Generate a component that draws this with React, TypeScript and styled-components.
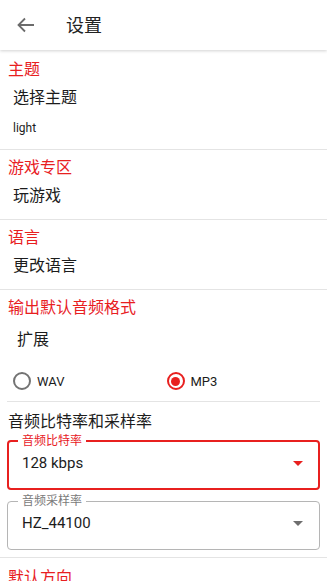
import React, { useState } from 'react';
import styled, { createGlobalStyle } from 'styled-components';

const RED = '#e8201f';

const GlobalStyle = createGlobalStyle`
  html, body {
    margin: 0;
    padding: 0;
    background: #fff;
  }
  body {
    font-family: Roboto, "Noto Sans CJK SC", sans-serif;
    color: #1c1c1c;
  }
`;

const Page = styled.div`
  width: 327px;
  height: 581px;
  overflow: hidden;
  background: #fff;
`;

const AppBar = styled.header`
  height: 50px;
  display: flex;
  align-items: center;
  padding-left: 14px;
  box-sizing: border-box;
  background: #fff;
  box-shadow: 0 1px 3px rgba(0, 0, 0, 0.18);
  position: relative;
  z-index: 1;
`;

const BackButton = styled.span`
  width: 24px;
  height: 24px;
  display: flex;
  color: #6b6b6b;
`;

const Title = styled.h1`
  margin: 2px 0 0 28px;
  font-size: 18px;
  font-weight: 400;
  line-height: 24px;
  color: #222;
`;

const Section = styled.section<{ first?: boolean; tight?: boolean }>`
  padding: ${(p) => (p.first ? '8px' : '6px')} 0 ${(p) => (p.tight ? '7px' : '11px')};
  border-bottom: 1px solid #e4e4e4;
`;

const SectionHeader = styled.div`
  padding-left: 8px;
  font-size: 16px;
  line-height: 24px;
  color: ${RED};
`;

const ItemTitle = styled.div<{ indent?: number; gap?: number }>`
  margin-top: ${(p) => p.gap ?? 4}px;
  padding-left: ${(p) => p.indent ?? 13}px;
  font-size: 16px;
  line-height: 24px;
  color: #1c1c1c;
`;

const ItemSub = styled.div`
  margin-top: 8px;
  padding-left: 13px;
  font-size: 12px;
  line-height: 20px;
  color: #1c1c1c;
`;

const RadioRow = styled.div`
  margin: 9px 7px 0;
  height: 40px;
  display: grid;
  grid-template-columns: 1fr 1fr;
  align-items: center;
  padding-left: 6px;
  border-bottom: 1px solid #e4e4e4;
`;

const RadioItem = styled.label`
  display: flex;
  align-items: center;
  gap: 6px;
  font-size: 13px;
  color: #1c1c1c;
  cursor: pointer;
`;

const RadioCircle = styled.span<{ checked: boolean }>`
  width: 18px;
  height: 18px;
  box-sizing: border-box;
  border-radius: 50%;
  border: 2px solid ${(p) => (p.checked ? RED : '#737373')};
  display: flex;
  align-items: center;
  justify-content: center;
  &::after {
    content: '';
    width: 9px;
    height: 9px;
    border-radius: 50%;
    background: ${(p) => (p.checked ? RED : 'transparent')};
  }
`;

const GroupTitle = styled.div`
  margin-top: 8px;
  padding-left: 8px;
  font-size: 16px;
  line-height: 24px;
  color: #1c1c1c;
`;

const SelectField = styled.fieldset<{ focused?: boolean }>`
  margin: 0 7px;
  padding: 5px 8px 15px 13px;
  border: ${(p) => (p.focused ? `2px solid ${RED}` : '1px solid #b5b5b5')};
  border-radius: 4px;
  display: flex;
  align-items: center;
  & + & {
    margin-top: 4px;
    padding-left: 14px;
    padding-right: 9px;
    padding-bottom: 16px;
  }
`;

const FieldLabel = styled.legend<{ focused?: boolean }>`
  margin-left: -4px;
  padding: 0 4px;
  font-size: 12px;
  line-height: 14px;
  color: ${(p) => (p.focused ? RED : '#7a7a7a')};
`;

const FieldRow = styled.div`
  display: flex;
  align-items: center;
  justify-content: space-between;
  width: 100%;
`;

const FieldValue = styled.span`
  font-size: 15px;
  line-height: 20px;
  color: #1c1c1c;
`;

const DropArrow = styled.svg<{ focused?: boolean }>`
  width: 24px;
  height: 24px;
  margin: -2px 0;
  fill: ${(p) => (p.focused ? RED : '#6e6e6e')};
`;

const LastSection = styled.section`
  padding: 8px 0 0;
`;

const BackIcon = () => (
  <svg viewBox="0 0 24 24" width="24" height="24" fill="none" stroke="currentColor" strokeWidth="1.8">
    <path d="M20 12H4.5M11 5.5 4.5 12l6.5 6.5" />
  </svg>
);

const Select = ({ label, value, focused }: { label: string; value: string; focused?: boolean }) => (
  <SelectField focused={focused}>
    <FieldLabel focused={focused}>{label}</FieldLabel>
    <FieldRow>
      <FieldValue>{value}</FieldValue>
      <DropArrow focused={focused} viewBox="0 0 24 24">
        <path d="M7 10l5 5 5-5z" />
      </DropArrow>
    </FieldRow>
  </SelectField>
);

export default function App() {
  const [format, setFormat] = useState<'wav' | 'mp3'>('mp3');

  return (
    <Page>
      <GlobalStyle />
      <AppBar>
        <BackButton><BackIcon /></BackButton>
        <Title>设置</Title>
      </AppBar>

      <Section first>
        <SectionHeader>主题</SectionHeader>
        <ItemTitle>选择主题</ItemTitle>
        <ItemSub>light</ItemSub>
      </Section>

      <Section>
        <SectionHeader>游戏专区</SectionHeader>
        <ItemTitle>玩游戏</ItemTitle>
      </Section>

      <Section>
        <SectionHeader>语言</SectionHeader>
        <ItemTitle>更改语言</ItemTitle>
      </Section>

      <Section tight>
        <SectionHeader>输出默认音频格式</SectionHeader>
        <ItemTitle indent={17} gap={8}>扩展</ItemTitle>
        <RadioRow>
          <RadioItem onClick={() => setFormat('wav')}>
            <RadioCircle checked={format === 'wav'} />
            WAV
          </RadioItem>
          <RadioItem onClick={() => setFormat('mp3')}>
            <RadioCircle checked={format === 'mp3'} />
            MP3
          </RadioItem>
        </RadioRow>
        <GroupTitle>音频比特率和采样率</GroupTitle>
        <Select label="音频比特率" value="128 kbps" focused />
        <Select label="音频采样率" value="HZ_44100" />
      </Section>

      <LastSection>
        <SectionHeader>默认方向</SectionHeader>
      </LastSection>
    </Page>
  );
}
